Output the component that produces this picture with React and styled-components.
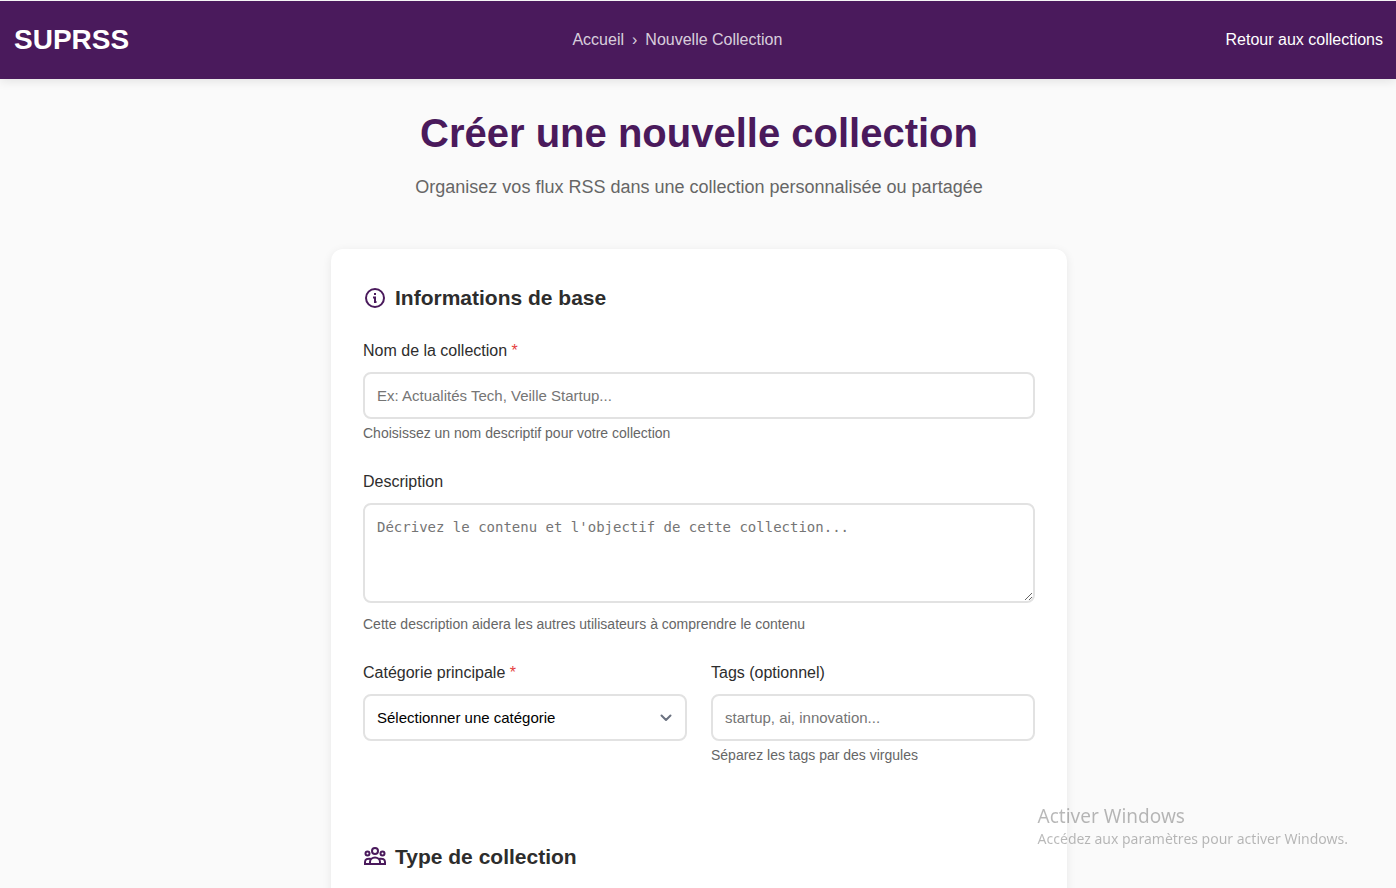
import React from 'react';
import styled, { createGlobalStyle } from 'styled-components';

const GlobalStyle = createGlobalStyle`
  *, *::before, *::after { box-sizing: border-box; }
  body {
    margin: 0;
    background: #fafafa;
    color: #2d2d2d;
    font-family: "Liberation Sans", Arial, sans-serif;
    font-size: 16px;
  }
`;

const Page = styled.div`
  height: 100vh;
  overflow: hidden;
  border-top: 1px solid #f5f5f5;
`;

const Header = styled.header`
  display: flex;
  align-items: center;
  justify-content: space-between;
  height: 78px;
  padding: 0 13px 0 14px;
  background: #4a1a5c;
  box-shadow: 0 2px 10px rgba(0, 0, 0, 0.1);
`;

const Logo = styled.span`
  color: #fff;
  font-size: 28px;
  font-weight: 700;
`;

const Breadcrumb = styled.nav`
  display: flex;
  gap: 8px;
  color: rgba(255, 255, 255, 0.8);
`;

const HeaderLink = styled.a`
  color: ${({ $strong }) => ($strong ? '#fff' : 'inherit')};
  text-decoration: none;
`;

const Main = styled.main`
  max-width: 768px;
  margin: 0 auto;
  padding: 32px 15px 32px 17px;
`;

const Intro = styled.div`
  margin-bottom: 48px;
  text-align: center;
`;

const Title = styled.h1`
  margin: 0 0 18px;
  color: #4a1a5c;
  font-size: 40px;
  line-height: 44px;
`;

const Subtitle = styled.p`
  margin: 0;
  color: #666;
  font-size: 18px;
  line-height: 28px;
`;

const Card = styled.form`
  padding: 32px;
  border-radius: 12px;
  background: #fff;
  box-shadow: 0 2px 10px rgba(0, 0, 0, 0.08);
`;

const Section = styled.section`
  margin-bottom: 49px;
`;

const SectionTitle = styled.h2`
  display: flex;
  align-items: center;
  gap: 8px;
  margin: 0 0 23px;
  font-size: 21px;
  line-height: 34px;

  svg { color: #4a1a5c; }
`;

const Field = styled.div`
  display: flex;
  flex-direction: column;
  margin-bottom: 26px;
`;

const FieldRow = styled.div`
  display: grid;
  grid-template-columns: 1fr 1fr;
  gap: 24px;
`;

const Label = styled.label`
  margin-bottom: 8px;
  line-height: 26px;
`;

const Required = styled.span`
  color: #e53e3e;
`;

const controlStyle = `
  width: 100%;
  padding: 12px;
  border: 2px solid #e2e2e2;
  border-radius: 8px;
  background: #fff;
  font-size: 15px;
  &::placeholder { color: #757575; }
`;

const Input = styled.input`
  ${controlStyle}
  height: 47px;
  font-family: inherit;
`;

const TextArea = styled.textarea`
  ${controlStyle}
  height: 100px;
  margin-bottom: 7px;
  font-family: "DejaVu Sans Mono", monospace;
  font-size: 14px;
  line-height: 20px;
  resize: vertical;
`;

const SelectBox = styled.div`
  display: grid;
  align-items: center;

  > * { grid-area: 1 / 1; }
  > svg {
    justify-self: end;
    margin-right: 13px;
    color: #6b7280;
    pointer-events: none;
  }
`;

const Select = styled.select`
  ${controlStyle}
  height: 47px;
  color: #000;
  font-family: inherit;
  appearance: none;
`;

const Hint = styled.small`
  margin-top: 4px;
  color: #666;
  font-size: 14px;
  line-height: 20px;
`;

const Watermark = styled.aside`
  position: fixed;
  right: 48px;
  bottom: 39px;
  color: rgba(0, 0, 0, 0.28);
  font-family: "Noto Sans", sans-serif;
  font-size: 14px;
  line-height: 20px;
  pointer-events: none;
`;

const WatermarkTitle = styled.div`
  font-size: 19px;
  line-height: 25px;
`;

const InfoIcon = () => (
  <svg width="24" height="24" viewBox="0 0 24 24" fill="none" stroke="currentColor" strokeWidth="2" aria-hidden="true">
    <circle cx="12" cy="12" r="9" />
    <path d="M10 11.500H12V17M12 16H13.500M11 8H13" />
  </svg>
);

const TeamIcon = () => (
  <svg width="24" height="24" viewBox="0 0 24 24" fill="none" stroke="currentColor" strokeWidth="2" aria-hidden="true">
    <circle cx="12" cy="6" r="3" />
    <circle cx="4.5" cy="8.5" r="2" />
    <circle cx="19.5" cy="8.5" r="2" />
    <path d="M7 19V17a5 4.500 0 0 1 10 0v2M7.500 13.800C4.500 13.200 2 14.500 2 17V19H22V17C22 14.500 19.500 13.200 16.500 13.800" />
  </svg>
);

const Chevron = () => (
  <svg width="16" height="16" viewBox="0 0 16 16" fill="none" stroke="currentColor" strokeWidth="2" strokeLinecap="round" strokeLinejoin="round" aria-hidden="true">
    <path d="M3.500 5.500 8 10l4.500-4.500" />
  </svg>
);

export default function App() {
  return (
    <Page>
      <GlobalStyle />
      <Header>
        <Logo>SUPRSS</Logo>
        <Breadcrumb aria-label="Breadcrumb">
          <HeaderLink href="#accueil">Accueil</HeaderLink>
          <span>›</span>
          <span>Nouvelle Collection</span>
        </Breadcrumb>
        <HeaderLink href="#collections" $strong>Retour aux collections</HeaderLink>
      </Header>
      <Main>
        <Intro>
          <Title>Créer une nouvelle collection</Title>
          <Subtitle>Organisez vos flux RSS dans une collection personnalisée ou partagée</Subtitle>
        </Intro>
        <Card>
          <Section>
            <SectionTitle><InfoIcon />Informations de base</SectionTitle>
            <Field>
              <Label htmlFor="name">Nom de la collection <Required>*</Required></Label>
              <Input id="name" type="text" placeholder="Ex: Actualités Tech, Veille Startup..." />
              <Hint>Choisissez un nom descriptif pour votre collection</Hint>
            </Field>
            <Field>
              <Label htmlFor="description">Description</Label>
              <TextArea id="description" placeholder="Décrivez le contenu et l'objectif de cette collection..." />
              <Hint>Cette description aidera les autres utilisateurs à comprendre le contenu</Hint>
            </Field>
            <FieldRow>
              <Field>
                <Label htmlFor="category">Catégorie principale <Required>*</Required></Label>
                <SelectBox>
                  <Select id="category" defaultValue="">
                    <option value="">Sélectionner une catégorie</option>
                  </Select>
                  <Chevron />
                </SelectBox>
              </Field>
              <Field>
                <Label htmlFor="tags">Tags (optionnel)</Label>
                <Input id="tags" type="text" placeholder="startup, ai, innovation..." />
                <Hint>Séparez les tags par des virgules</Hint>
              </Field>
            </FieldRow>
          </Section>
          <SectionTitle><TeamIcon />Type de collection</SectionTitle>
        </Card>
      </Main>
      <Watermark>
        <WatermarkTitle>Activer Windows</WatermarkTitle>
        Accédez aux paramètres pour activer Windows.
      </Watermark>
    </Page>
  );
}
